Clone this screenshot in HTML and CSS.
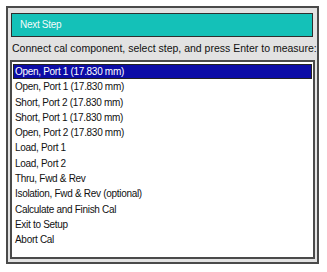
FILE: index.html
```html
<!DOCTYPE html>
<html lang="en">
<head>
    <meta charset="UTF-8">
    <title>Next Step</title>
    <link rel="stylesheet" href="styles.css">
</head>
<body>
    <div class="step-panel">
        <div class="title">Next Step</div>
        <div class="prompt">Connect cal component, select step, and press Enter to measure:</div>
        <ul class="steps">
            <li class="selected">Open, Port 1 (17.830 mm)</li>
            <li>Open, Port 1 (17.830 mm)</li>
            <li>Short, Port 2 (17.830 mm)</li>
            <li>Short, Port 1 (17.830 mm)</li>
            <li>Open, Port 2 (17.830 mm)</li>
            <li>Load, Port 1</li>
            <li>Load, Port 2</li>
            <li>Thru, Fwd &amp; Rev</li>
            <li>Isolation, Fwd &amp; Rev (optional)</li>
            <li>Calculate and Finish Cal</li>
            <li>Exit to Setup</li>
            <li>Abort Cal</li>
        </ul>
    </div>
</body>
</html>
```

FILE: styles.css
```css
body {
    margin: 0;
    background: #fff;
    font-family: "Liberation Sans", Arial, sans-serif;
    font-size: 10px;
    letter-spacing: -0.3px;
    color: #111;
}
.step-panel {
    margin: 6px;
    width: 309px;
    height: 254px;
    border: 2px solid #4a4a4a;
    background: #e2e2e2;
    display: flex;
    flex-direction: column;
}
.title {
    margin: 5px 4px 0 3px;
    height: 22px;
    border: 1px solid #2e2e2e;
    background: #14c1b8;
    color: #f2fbfb;
    padding-left: 8px;
    line-height: 22px;
}
.prompt {
    padding-left: 4px;
    height: 23px;
    line-height: 22px;
    font-size: 10.5px;
    letter-spacing: 0;
}
.steps {
    list-style: none;
    margin: 0 2px 3px 2px;
    padding: 2px 1px;
    flex: 1;
    background: #fff;
    border: 2px solid #4a4a4a;
}
.steps li {
    height: 13.3px;
    line-height: 13.3px;
    padding-left: 1px;
    border: 1px solid transparent;
}
.steps .selected {
    background: #0c0ca6;
    color: #fff;
    border-color: #222;
}
```
